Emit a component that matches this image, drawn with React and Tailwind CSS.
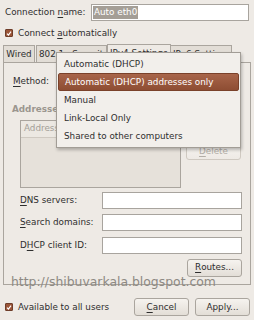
import React from "react";

const U = ({ children }) => <span className="underline underline-offset-[1.5px] decoration-[0.8px]">{children}</span>;

function Check() {
  return (
    <span className="flex h-[8px] w-[8px] items-center justify-center rounded-[1px] border border-[#6e3d29] bg-[#9a5437]">
      <svg width="7" height="7" viewBox="0 0 8 8">
        <path d="M1.3 4.2 L3.2 6 L6.7 1.6" fill="none" stroke="white" strokeWidth="1.6" />
      </svg>
    </span>
  );
}

function Btn({ children, className = "" }) {
  return (
    <div className={"flex items-center justify-center rounded-[3px] border border-[#aaa59e] bg-gradient-to-b from-[#f6f3ef] to-[#e3ded7] " + className}>
      {children}
    </div>
  );
}

function Input({ className = "", children }) {
  return <div className={"border border-[#a8a49e] bg-white " + className}>{children}</div>;
}

export default function App() {
  return (
    <div className="relative h-[320px] w-[254px] overflow-hidden bg-[#eeeae5] text-[8.8px] leading-none text-[#2e2e2e]" style={{ fontFamily: '"DejaVu Sans", sans-serif' }}>
      {/* Row 1 */}
      <div className="mt-[4px] flex h-[17px] items-center pl-[5px] pr-[5px]">
        <span>Connection <U>n</U>ame:</span>
        <Input className="ml-auto flex h-[17px] w-[158px] items-center pl-[1px]">
          <span className="bg-[#a49e96] px-[1px] py-[2px] text-white">Auto eth0</span>
        </Input>
      </div>
      {/* Row 2 */}
      <div className="mt-[7px] flex h-[10px] items-center gap-[5px] pl-[5px]">
        <Check />
        <span>Connect <U>a</U>utomatically</span>
      </div>
      {/* Tabs */}
      <div className="mt-[6px] flex h-[18px] items-end whitespace-nowrap pl-[3px]">
        <div className="flex h-[17px] w-[32px] items-center justify-center overflow-hidden border border-b-0 border-[#aaa59e] bg-[#e2ddd6]">Wired</div>
        <div className="ml-[1px] flex h-[17px] w-[71px] items-center overflow-hidden border border-b-0 border-[#aaa59e] bg-[#e2ddd6] pl-[2px]">802.1x Security</div>
        <div className="relative z-10 -mb-[1px] flex h-[19px] w-[64px] items-center overflow-hidden border border-b-0 border-[#aaa59e] bg-[#eeeae5] pl-[2px] pb-[1px]">IPv4 Settings</div>
        <div className="flex h-[17px] w-[61px] items-center overflow-hidden border border-b-0 border-l-0 border-[#aaa59e] bg-[#e2ddd6] pl-[2px]">IPv6 Settings</div>
      </div>
      {/* Panel */}
      <div className="ml-[3px] h-[223px] w-[248px] border border-[#aaa59e] bg-[#eeeae5]">
        <div className="mt-[13px] flex h-[10px] items-center pl-[9px]">
          <span><U>M</U>ethod:</span>
        </div>
        <div className="mt-[19px] pl-[8px] font-bold text-[#9b968f]">Addresses</div>
        <div className="mt-[6px] flex pl-[16px]">
          <div className="h-[68px] w-[161px] border border-[#aaa59e] bg-[#e6e1da]">
            <div className="flex h-[17px] items-center border-b border-[#cfc9c1] bg-[#ece8e2] pl-[3px] text-[#a39e97]">Address</div>
          </div>
          <div className="ml-[5px] flex flex-col">
            <Btn className="mt-[1px] h-[17px] w-[55px] text-[#a6a19a]">Add</Btn>
            <Btn className="mt-[6px] h-[16px] w-[55px] border-[#cfc9c1] from-[#eeeae5] to-[#eeeae5] text-[#b3aea7]"><U>D</U>elete</Btn>
          </div>
        </div>
        <div className="mt-[4px] flex h-[17px] items-center pl-[16px] pr-[8px]">
          <span><U>D</U>NS servers:</span>
          <Input className="ml-auto h-[17px] w-[140px]" />
        </div>
        <div className="mt-[5px] flex h-[17px] items-center pl-[16px] pr-[8px]">
          <span><U>S</U>earch domains:</span>
          <Input className="ml-auto h-[17px] w-[140px]" />
        </div>
        <div className="mt-[6px] flex h-[17px] items-center pl-[16px] pr-[8px]">
          <span>D<U>H</U>CP client ID:</span>
          <Input className="ml-auto h-[17px] w-[140px]" />
        </div>
        <div className="mt-[5px] flex justify-end pr-[8px]">
          <Btn className="h-[18px] w-[55px]"><U>R</U>outes...</Btn>
        </div>
      </div>
      {/* Bottom */}
      <div className="mt-[13px] flex h-[18px] items-center pl-[5px] pr-[4px]">
        <Check />
        <span className="ml-[5px]">Available to all users</span>
        <Btn className="ml-auto h-[18px] w-[55px]"><U>C</U>ancel</Btn>
        <Btn className="ml-[6px] h-[18px] w-[55px]">Apply...</Btn>
      </div>

      {/* Watermark */}
      <div className="absolute left-[11px] top-[276px] whitespace-nowrap text-[12.4px] text-[#8d8983]" style={{ fontFamily: '"DejaVu Sans", sans-serif' }}>http://shibuvarkala.blogspot.com</div>

      {/* Popup menu */}
      <div className="absolute left-[56px] top-[52px] z-20 w-[185px] whitespace-nowrap border border-[#a29d96] bg-[#f2efeb] py-[2px] shadow-[1px_2px_3px_rgba(0,0,0,0.25)]">
        <div className="flex h-[18px] items-center pl-[7px]">Automatic (DHCP)</div>
        <div className="mx-[1px] flex h-[18px] items-center rounded-[2px] border border-[#7a412a] bg-gradient-to-b from-[#a8654a] to-[#8e4d33] pl-[6px] text-white">Automatic (DHCP) addresses only</div>
        <div className="flex h-[18px] items-center pl-[7px]">Manual</div>
        <div className="flex h-[18px] items-center pl-[7px]">Link-Local Only</div>
        <div className="flex h-[18px] items-center pl-[7px]">Shared to other computers</div>
      </div>
    </div>
  );
}
